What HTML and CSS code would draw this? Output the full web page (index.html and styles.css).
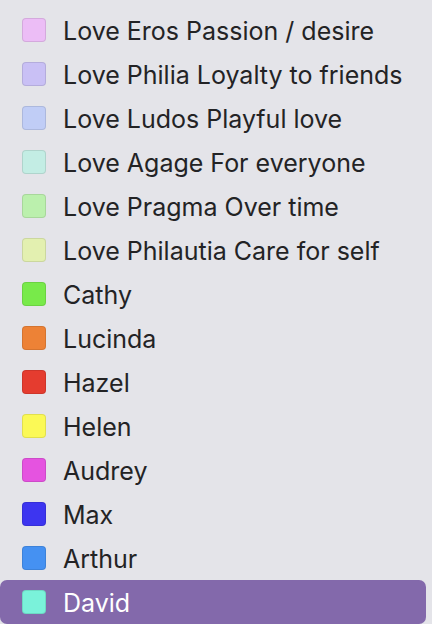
FILE: index.html
```html
<!DOCTYPE html>
<html lang="en">
<head>
    <meta charset="UTF-8">
    <meta name="viewport" content="width=device-width, initial-scale=1.0">
    <title>Tags</title>
    <link rel="stylesheet" href="styles.css">
</head>
<body>
    <ul class="tags">
        <li class="tag"><span class="swatch eros"></span><span class="label">Love Eros Passion / desire</span></li>
        <li class="tag"><span class="swatch philia"></span><span class="label">Love Philia Loyalty to friends</span></li>
        <li class="tag"><span class="swatch ludos"></span><span class="label">Love Ludos Playful love</span></li>
        <li class="tag"><span class="swatch agage"></span><span class="label">Love Agage For everyone</span></li>
        <li class="tag"><span class="swatch pragma"></span><span class="label">Love Pragma Over time</span></li>
        <li class="tag"><span class="swatch philautia"></span><span class="label">Love Philautia Care for self</span></li>
        <li class="tag"><span class="swatch cathy"></span><span class="label">Cathy</span></li>
        <li class="tag"><span class="swatch lucinda"></span><span class="label">Lucinda</span></li>
        <li class="tag"><span class="swatch hazel"></span><span class="label">Hazel</span></li>
        <li class="tag"><span class="swatch helen"></span><span class="label">Helen</span></li>
        <li class="tag"><span class="swatch audrey"></span><span class="label">Audrey</span></li>
        <li class="tag"><span class="swatch max"></span><span class="label">Max</span></li>
        <li class="tag"><span class="swatch arthur"></span><span class="label">Arthur</span></li>
        <li class="tag selected"><span class="swatch david"></span><span class="label">David</span></li>
    </ul>
</body>
</html>
```
FILE: styles.css
```css
body {
    margin: 0;
    background-color: #e4e4e9;
    font-family: Inter, "Noto Sans", sans-serif;
    color: #232325;
    overflow: hidden;
}

.tags {
    list-style: none;
    margin: 0;
    padding: 8px 6px 0 0;
}

.tag {
    display: flex;
    align-items: center;
    gap: 17px;
    height: 44px;
    padding-left: 22px;
    font-size: 25px;
    line-height: 30px;
    border-radius: 7px;
}

.label {
    margin-top: 2px;
}

.tag.selected {
    background-color: #8369ab;
    color: #fff;
}

.swatch {
    width: 22px;
    height: 22px;
    border-radius: 4px;
    border: 1px solid rgba(0, 0, 0, 0.1);
    flex-shrink: 0;
}

.eros { background-color: #ecbdf6; }
.philia { background-color: #c9c0f5; }
.ludos { background-color: #c0cdf6; }
.agage { background-color: #c3ede4; }
.pragma { background-color: #bbf0ad; }
.philautia { background-color: #e3f0b0; }
.cathy { background-color: #78ea4a; }
.lucinda { background-color: #ed8236; }
.hazel { background-color: #e53c2f; }
.helen { background-color: #fbf956; }
.audrey { background-color: #e553e0; }
.max { background-color: #3d35f0; }
.arthur { background-color: #4591f2; }
.david { background-color: #7af2da; }
```
